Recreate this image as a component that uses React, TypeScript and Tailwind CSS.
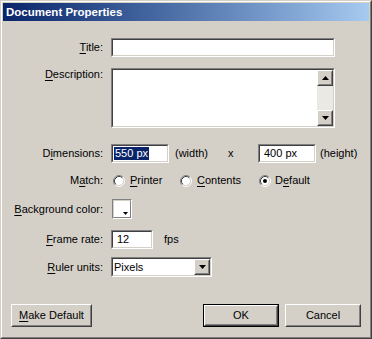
import React from "react";

const font = { fontFamily: '"Liberation Sans", Arial, sans-serif' };

function U({ children }: { children: React.ReactNode }) {
  return <span className="underline underline-offset-[2px] decoration-[1px]">{children}</span>;
}

function Sunken({ className = "", children }: { className?: string; children?: React.ReactNode }) {
  return (
    <div className={"border border-t-[#808080] border-l-[#808080] border-b-white border-r-white " + className}>
      <div className="border border-t-[#404040] border-l-[#404040] border-b-[#d4d0c8] border-r-[#d4d0c8] bg-white h-full w-full flex">
        {children}
      </div>
    </div>
  );
}

function Raised({ className = "", children }: { className?: string; children?: React.ReactNode }) {
  return (
    <div className={"border border-t-white border-l-white border-b-[#404040] border-r-[#404040] bg-[#d4d0c8] " + className}>
      <div className="border border-t-[#d4d0c8] border-l-[#d4d0c8] border-b-[#808080] border-r-[#808080] h-full w-full flex items-center justify-center">
        {children}
      </div>
    </div>
  );
}

function Radio({ checked = false }: { checked?: boolean }) {
  return (
    <svg width="12" height="12" viewBox="0 0 12 12" className="shrink-0">
      <circle cx="6" cy="6" r="4.5" fill="white" />
      <path d="M2.11 9.89 A5.5 5.5 0 0 1 9.89 2.11" stroke="#808080" strokeWidth="1" fill="none" />
      <path d="M9.89 2.11 A5.5 5.5 0 0 1 2.11 9.89" stroke="#ffffff" strokeWidth="1" fill="none" />
      <path d="M2.82 9.18 A4.5 4.5 0 0 1 9.18 2.82" stroke="#404040" strokeWidth="1" fill="none" />
      <path d="M9.18 2.82 A4.5 4.5 0 0 1 2.82 9.18" stroke="#d4d0c8" strokeWidth="1" fill="none" />
      {checked && <circle cx="6" cy="6" r="2" fill="black" />}
    </svg>
  );
}

function Label({ children, top = false }: { children: React.ReactNode; top?: boolean }) {
  return (
    <div className={"w-[100px] shrink-0 text-right " + (top ? "self-start" : "")}>{children}</div>
  );
}

export default function App() {
  return (
    <div style={font} className="w-[372px] h-[339px] text-[11px] leading-[13px] text-black">
      <div className="w-full h-full border border-t-[#d4d0c8] border-l-[#d4d0c8] border-b-[#404040] border-r-[#404040] bg-[#d4d0c8]">
        <div className="w-full h-full border border-t-white border-l-white border-b-[#808080] border-r-[#808080] p-[1px] flex flex-col">
          {/* title bar */}
          <div className="h-[18px] shrink-0 bg-gradient-to-r from-[#0a246a] to-[#a6caf0] flex items-center pl-[3px]">
            <span className="text-white font-bold text-[11.5px]">Document Properties</span>
          </div>

          {/* Title */}
          <div className="flex items-center h-[19px] mt-[17px]">
            <Label>
              <U>T</U>itle:
            </Label>
            <Sunken className="ml-[8px] w-[224px] h-[19px]" />
          </div>

          {/* Description */}
          <div className="flex items-start h-[60px] mt-[11px]">
            <Label top>
              <U>D</U>escription:
            </Label>
            <Sunken className="ml-[8px] w-[224px] h-[60px]">
              <div className="flex-1" />
              <div className="w-[16px] h-full flex flex-col bg-[#ebe9e4]">
                <Raised className="w-[16px] h-[16px]">
                  <svg width="7" height="4" viewBox="0 0 7 4">
                    <path d="M3.5 0 L7 4 L0 4 Z" fill="#000" />
                  </svg>
                </Raised>
                <div className="flex-1" />
                <Raised className="w-[16px] h-[16px]">
                  <svg width="7" height="4" viewBox="0 0 7 4">
                    <path d="M0 0 L7 0 L3.5 4 Z" fill="#000" />
                  </svg>
                </Raised>
              </div>
            </Sunken>
          </div>

          {/* Dimensions */}
          <div className="flex items-center h-[19px] mt-[16px]">
            <Label>
              D<U>i</U>mensions:
            </Label>
            <Sunken className="ml-[8px] w-[58px] h-[19px]">
              <div className="flex items-center pl-[1px]">
                <span className="bg-[#0a246a] text-white px-[1px]">550 px</span>
              </div>
            </Sunken>
            <span className="ml-[6px] w-[53px]">(width)</span>
            <span className="w-[30px]">x</span>
            <Sunken className="w-[58px] h-[19px]">
              <div className="flex items-center pl-[4px]">400 px</div>
            </Sunken>
            <span className="ml-[4px]">(height)</span>
          </div>

          {/* Match */}
          <div className="flex items-center h-[19px] mt-[8px]">
            <Label>
              M<U>a</U>tch:
            </Label>
            <div className="ml-[10px] w-[67px] flex items-center">
              <Radio />
              <span className="ml-[5px]">
                <U>P</U>rinter
              </span>
            </div>
            <div className="w-[79px] flex items-center">
              <Radio />
              <span className="ml-[5px]">
                <U>C</U>ontents
              </span>
            </div>
            <div className="flex items-center">
              <Radio checked />
              <span className="ml-[4px]">
                D<U>e</U>fault
              </span>
            </div>
          </div>

          {/* Background color */}
          <div className="flex items-center h-[20px] mt-[9px]">
            <Label>
              <U>B</U>ackground color:
            </Label>
            <div className="ml-[9px] w-[20px] h-[20px] border border-t-[#808080] border-l-[#808080] border-b-white border-r-white">
              <div className="w-full h-full bg-white border border-t-[#d4d0c8] border-l-[#d4d0c8] border-b-[#808080] border-r-[#808080] flex items-end justify-end pr-[2px] pb-[2px]">
                <svg width="5" height="3" viewBox="0 0 5 3">
                  <path d="M0 0 L5 0 L2.5 3 Z" fill="#000" />
                </svg>
              </div>
            </div>
          </div>

          {/* Frame rate */}
          <div className="flex items-center h-[19px] mt-[11px]">
            <Label>
              <U>F</U>rame rate:
            </Label>
            <Sunken className="ml-[8px] w-[42px] h-[19px]">
              <div className="flex items-center pl-[4px]">12</div>
            </Sunken>
            <span className="ml-[11px]">fps</span>
          </div>

          {/* Ruler units */}
          <div className="flex items-center h-[20px] mt-[8px]">
            <Label>
              <U>R</U>uler units:
            </Label>
            <Sunken className="ml-[8px] w-[101px] h-[20px]">
              <div className="flex-1 flex items-center pl-[1px]">Pixels</div>
              <Raised className="w-[16px] h-[16px]">
                <svg width="7" height="4" viewBox="0 0 7 4">
                  <path d="M0 0 L7 0 L3.5 4 Z" fill="#000" />
                </svg>
              </Raised>
            </Sunken>
          </div>

          {/* Buttons */}
          <div className="flex items-center h-[23px] mt-[27px] px-[8px]">
            <div className="border border-t-white border-l-white border-b-[#404040] border-r-[#404040] w-[81px] h-[23px]">
              <div className="border border-t-[#d4d0c8] border-l-[#d4d0c8] border-b-[#808080] border-r-[#808080] h-full flex items-center justify-center">
                <span>
                  <U>M</U>ake Default
                </span>
              </div>
            </div>
            <div className="flex-1" />
            <div className="border border-black w-[76px] h-[23px]">
              <div className="border border-t-white border-l-white border-b-[#404040] border-r-[#404040] h-full">
                <div className="border border-t-[#d4d0c8] border-l-[#d4d0c8] border-b-[#808080] border-r-[#808080] h-full flex items-center justify-center">
                  OK
                </div>
              </div>
            </div>
            <div className="ml-[6px] border border-t-white border-l-white border-b-[#404040] border-r-[#404040] w-[76px] h-[23px]">
              <div className="border border-t-[#d4d0c8] border-l-[#d4d0c8] border-b-[#808080] border-r-[#808080] h-full flex items-center justify-center">
                Cancel
              </div>
            </div>
          </div>
        </div>
      </div>
    </div>
  );
}
